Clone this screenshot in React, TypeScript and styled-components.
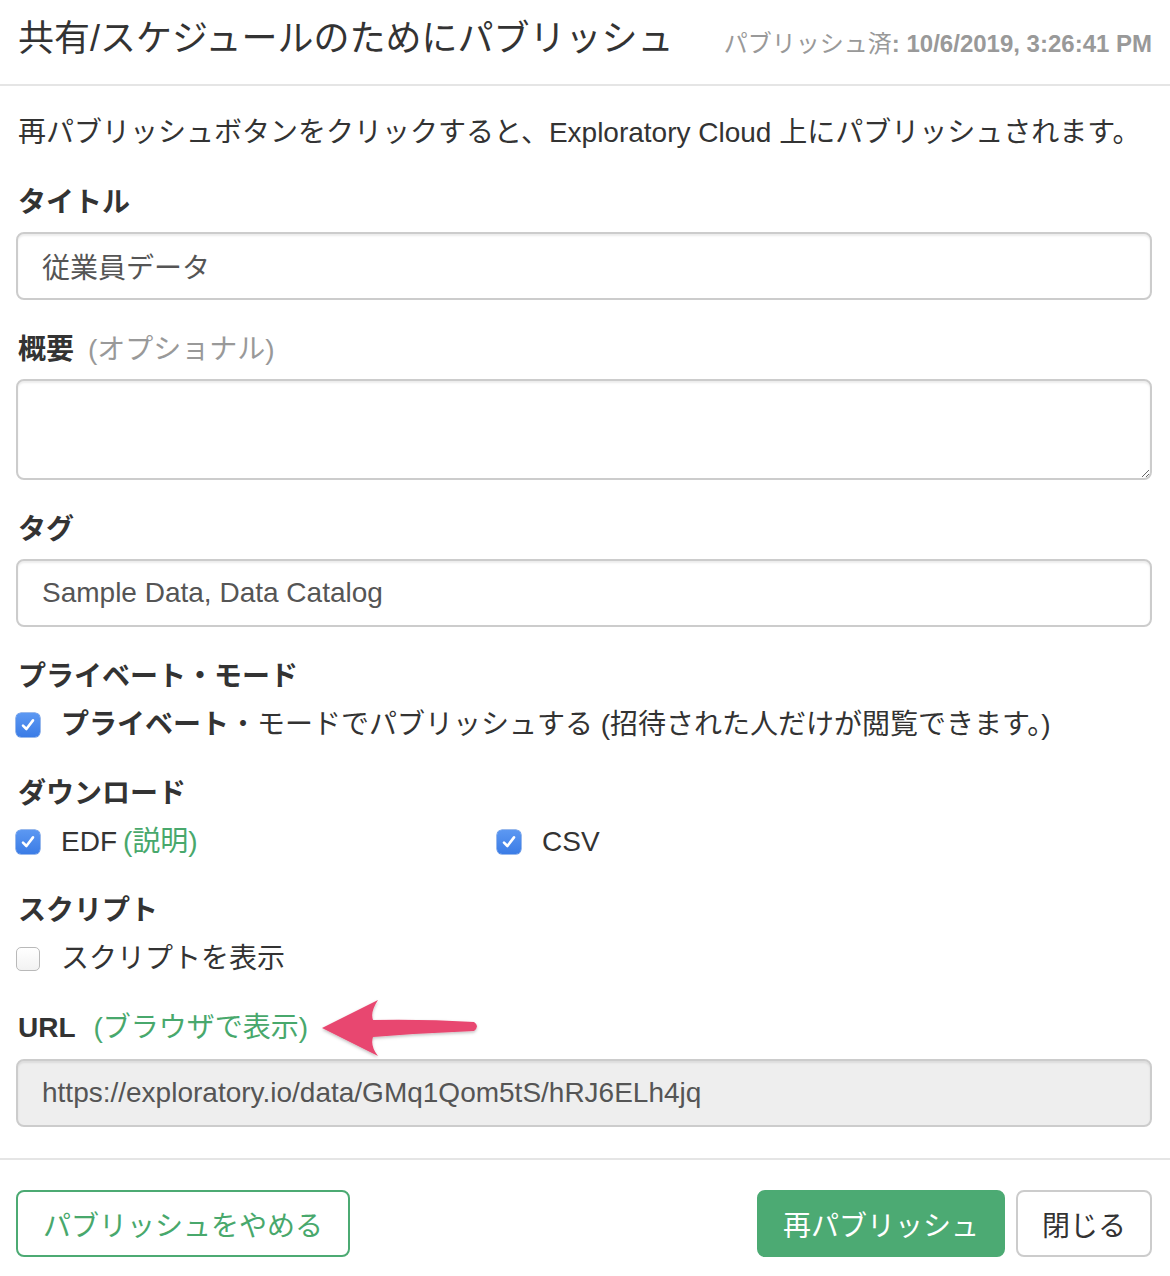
import React from "react";
import styled, { createGlobalStyle } from "styled-components";

const Global = createGlobalStyle`
  html, body { margin: 0; padding: 0; background: #fff; }
  body {
    font-family: "Liberation Sans", "Noto Sans CJK JP", sans-serif;
    color: #333;
    -webkit-font-smoothing: antialiased;
  }
  * { box-sizing: border-box; }
`;

const Modal = styled.div`
  width: 1170px;
  display: flex;
  flex-direction: column;
`;

const Header = styled.div`
  height: 86px;
  padding: 0 18px 6px 18px;
  display: flex;
  align-items: center;
  justify-content: space-between;
  border-bottom: 2px solid #e5e5e5;
`;

const Title = styled.h4`
  margin: 0;
  font-size: 36px;
  font-weight: 400;
  color: #333;
  line-height: 40px;
`;

const Stamp = styled.div`
  font-size: 24px;
  color: #999;
  margin-top: 4px;
  b { font-weight: 700; }
`;

const Body = styled.div`
  padding: 27px 18px 31px 16px;
  display: flex;
  flex-direction: column;
  gap: 32px;
`;

const Intro = styled.p`
  margin: 0 0 0 2px;
  font-size: 28px;
  line-height: 40px;
  color: #333;
`;

const Group = styled.div<{ $gap?: number }>`
  display: flex;
  flex-direction: column;
  gap: ${(p) => p.$gap ?? 11}px;
`;

const LabelRow = styled.div`
  position: relative;
  display: flex;
  align-items: center;
  padding-left: 2px;
  font-size: 28px;
  line-height: 36px;
`;

const Label = styled.span`
  font-weight: 700;
  color: #333;
`;

const Hint = styled.span<{ $green?: boolean; $gap: number }>`
  margin-left: ${(p) => p.$gap}px;
  color: ${(p) => (p.$green ? "#48a86c" : "#999")};
  font-weight: 400;
`;

const Input = styled.input<{ $readonly?: boolean }>`
  width: 100%;
  height: 68px;
  padding: 0 24px;
  font-family: inherit;
  font-size: 28px;
  color: #555;
  border: 2px solid #ccc;
  border-radius: 8px;
  background: ${(p) => (p.$readonly ? "#eee" : "#fff")};
  box-shadow: inset 0 2px 2px rgba(0, 0, 0, 0.075);
  outline: none;
`;

const TextArea = styled.textarea`
  width: 100%;
  height: 101px;
  padding: 12px 24px;
  font-family: inherit;
  font-size: 28px;
  color: #555;
  border: 2px solid #ccc;
  border-radius: 8px;
  box-shadow: inset 0 2px 2px rgba(0, 0, 0, 0.075);
  outline: none;
  display: block;
`;

const CheckGrid = styled.div`
  display: grid;
  grid-template-columns: 481px 1fr;
`;

const CheckRow = styled.label`
  display: flex;
  align-items: center;
  font-size: 28px;
  line-height: 38px;
  color: #333;
`;

const Box = styled.span<{ $on?: boolean }>`
  width: 24px;
  height: 24px;
  border-radius: 5px;
  margin-right: 21px;
  flex: none;
  display: flex;
  align-items: center;
  justify-content: center;
  background: ${(p) =>
    p.$on ? "linear-gradient(#5c98f2, #3b7ce6)" : "linear-gradient(#fff, #f2f2f2)"};
  border: ${(p) => (p.$on ? "none" : "1.5px solid #b9b9b9")};
  box-shadow: ${(p) => (p.$on ? "0 0 0 0.5px #3574d9" : "none")};
`;

const Green = styled.span`
  color: #48a86c;
  margin-left: 6px;
`;

const Bold = styled.span`
  font-weight: 700;
`;

const ArrowSvg = styled.svg`
  position: absolute;
  left: 286px;
  top: -14px;
  width: 180px;
  height: 66px;
  overflow: visible;
`;

const Footer = styled.div`
  border-top: 2px solid #e5e5e5;
  padding: 30px 18px 19px 16px;
  display: flex;
  align-items: center;
  justify-content: space-between;
`;

const Right = styled.div`
  display: flex;
  gap: 11px;
`;

const Button = styled.button<{ $variant: "outline" | "primary" | "default" }>`
  height: 67px;
  padding: 0 ${(p) => (p.$variant === "outline" ? 25 : 24)}px;
  font-family: inherit;
  font-size: 28px;
  border-radius: 8px;
  cursor: pointer;
  border: 2px solid
    ${(p) => (p.$variant === "default" ? "#ccc" : "#4caa73")};
  background: ${(p) => (p.$variant === "primary" ? "#4caa73" : "#fff")};
  color: ${(p) =>
    p.$variant === "primary" ? "#fff" : p.$variant === "outline" ? "#48a86c" : "#333"};
`;

const Check = () => (
  <svg width="16" height="16" viewBox="0 0 16 16">
    <path d="M3 8.6 L6.4 12 L13 3.4" fill="none" stroke="#fff" strokeWidth="2.6" strokeLinecap="round" strokeLinejoin="round" />
  </svg>
);

const CheckBox = ({ on }: { on?: boolean }) => <Box $on={on}>{on && <Check />}</Box>;

export default function App() {
  return (
    <>
      <Global />
      <Modal>
        <Header>
          <Title>共有/スケジュールのためにパブリッシュ</Title>
          <Stamp>
            パブリッシュ済<b>: 10/6/2019, 3:26:41 PM</b>
          </Stamp>
        </Header>
        <Body>
          <Intro>再パブリッシュボタンをクリックすると、Exploratory Cloud 上にパブリッシュされます。</Intro>
          <Group>
            <LabelRow>
              <Label>タイトル</Label>
            </LabelRow>
            <Input defaultValue="従業員データ" />
          </Group>
          <Group>
            <LabelRow>
              <Label>概要</Label>
              <Hint $gap={14}>(オプショナル)</Hint>
            </LabelRow>
            <TextArea />
          </Group>
          <Group>
            <LabelRow>
              <Label>タグ</Label>
            </LabelRow>
            <Input defaultValue="Sample Data, Data Catalog" />
          </Group>
          <Group>
            <LabelRow>
              <Label>プライベート・モード</Label>
            </LabelRow>
            <CheckRow>
              <CheckBox on />
              <Bold>プライベート</Bold>・モードでパブリッシュする (招待された人だけが閲覧できます。)
            </CheckRow>
          </Group>
          <Group>
            <LabelRow>
              <Label>ダウンロード</Label>
            </LabelRow>
            <CheckGrid>
              <CheckRow>
                <CheckBox on />
                EDF<Green>(説明)</Green>
              </CheckRow>
              <CheckRow>
                <CheckBox on />
                CSV
              </CheckRow>
            </CheckGrid>
          </Group>
          <Group>
            <LabelRow>
              <Label>スクリプト</Label>
            </LabelRow>
            <CheckRow>
              <CheckBox />
              スクリプトを表示
            </CheckRow>
          </Group>
          <Group $gap={13}>
            <LabelRow>
              <Label>URL</Label>
              <Hint $green $gap={18}>(ブラウザで表示)</Hint>
              <ArrowSvg viewBox="0 0 180 66">
                <defs>
                  <filter id="sh" x="-10%" y="-20%" width="120%" height="150%">
                    <feDropShadow dx="0" dy="1.5" stdDeviation="1.5" floodColor="#000" floodOpacity="0.25" />
                  </filter>
                </defs>
                <path
                  d="M20,32 L76,4 Q68,16 71,24 Q122,23 172,26 Q178,30 172,35 Q122,37 71,41 Q68,50 76,60 Z"
                  fill="#e8466f"
                  filter="url(#sh)"
                />
              </ArrowSvg>
            </LabelRow>
            <Input $readonly readOnly defaultValue="https://exploratory.io/data/GMq1Qom5tS/hRJ6ELh4jq" />
          </Group>
        </Body>
        <Footer>
          <Button $variant="outline">パブリッシュをやめる</Button>
          <Right>
            <Button $variant="primary">再パブリッシュ</Button>
            <Button $variant="default">閉じる</Button>
          </Right>
        </Footer>
      </Modal>
    </>
  );
}
